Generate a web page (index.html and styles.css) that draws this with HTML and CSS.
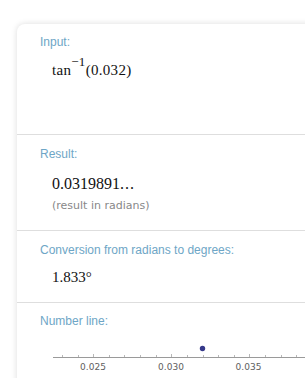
FILE: index.html
```html
<!DOCTYPE html>
<html>
  <head>
    <meta charset="utf-8">
    <title>arctan(0.032)</title>
    <link rel="stylesheet" href="styles.css">
  </head>
  <body>
    <div class="card">
      <section class="pod pod-input">
        <h2 class="label">Input:</h2>
        <div class="math">tan<sup class="sup">&minus;1</sup>(0.032)</div>
      </section>
      <section class="pod pod-result">
        <h2 class="label">Result:</h2>
        <div class="math">0.0319891<span class="dots">...</span></div>
        <div class="note">(result in radians)</div>
      </section>
      <section class="pod pod-degrees">
        <h2 class="label">Conversion from radians to degrees:</h2>
        <div class="math">1.833&deg;</div>
      </section>
      <section class="pod pod-line">
        <h2 class="label">Number line:</h2>
        <svg class="numberline" width="260" height="30" viewBox="0 0 260 30">
          <line x1="0" y1="13.5" x2="260" y2="13.5" stroke="#9a9a9a" stroke-width="1"/>
          <g stroke="#b8b8b8" stroke-width="1">
            <line x1="9.5" y1="11" x2="9.5" y2="13"/>
            <line x1="25.5" y1="11" x2="25.5" y2="13"/>
            <line x1="40.5" y1="10" x2="40.5" y2="13"/>
            <line x1="56.5" y1="11" x2="56.5" y2="13"/>
            <line x1="71.5" y1="11" x2="71.5" y2="13"/>
            <line x1="87.5" y1="11" x2="87.5" y2="13"/>
            <line x1="103.5" y1="11" x2="103.5" y2="13"/>
            <line x1="118.5" y1="10" x2="118.5" y2="13"/>
            <line x1="134.5" y1="11" x2="134.5" y2="13"/>
            <line x1="150.5" y1="11" x2="150.5" y2="13"/>
            <line x1="165.5" y1="11" x2="165.5" y2="13"/>
            <line x1="181.5" y1="11" x2="181.5" y2="13"/>
            <line x1="196.5" y1="10" x2="196.5" y2="13"/>
            <line x1="212.5" y1="11" x2="212.5" y2="13"/>
            <line x1="228.5" y1="11" x2="228.5" y2="13"/>
            <line x1="243.5" y1="11" x2="243.5" y2="13"/>
            <line x1="259.5" y1="11" x2="259.5" y2="13"/>
          </g>
          <circle cx="149.5" cy="4.5" r="2.7" fill="#36398a"/>
          <g class="ticklabel" fill="#5e5e5e">
            <text x="40" y="25.5" text-anchor="middle">0.025</text>
            <text x="118" y="25.5" text-anchor="middle">0.030</text>
            <text x="195.5" y="25.5" text-anchor="middle">0.035</text>
          </g>
        </svg>
      </section>
    </div>
  </body>
</html>
```

FILE: styles.css
```css
html,
body {
  overflow: hidden;
}

body {
  margin: 0;
  padding: 24px 0 0 17px;
  background-color: #fff;
  font-family: "Liberation Sans", Arial, sans-serif;
}

.card {
  width: 320px;
  border-radius: 8px 8px 0 0;
  box-shadow: 0 0 6px hsla(0, 0%, 0%, 0.14);
  background-color: #fff;
}

.pod {
  padding: 12px 0 0 23px;
  border-bottom: 1px solid #dedede;
}

.label {
  margin: 0;
  color: #6ea6c6;
  font-size: 12px;
  font-weight: normal;
  line-height: 14px;
}

.math {
  margin-left: 12px;
  color: #111;
  font-family: "Liberation Serif", "Times New Roman", serif;
  font-size: 15px;
  line-height: 18px;
}

.sup {
  font-size: 13px;
  vertical-align: 9px;
  line-height: 0;
}

.dots {
  letter-spacing: 1px;
}

.note {
  margin-left: 12px;
  color: #888;
  font-family: "DejaVu Sans", sans-serif;
  font-size: 11px;
  line-height: 13px;
}

.pod-input {
  height: 99px;
  padding-top: 11px;
}

.pod-input .math {
  margin-top: 12px;
  letter-spacing: 0.3px;
}

.pod-result {
  height: 83px;
}

.pod-result .math {
  margin-top: 14px;
  font-size: 16px;
}

.pod-result .note {
  margin-top: 6px;
}

.pod-degrees {
  height: 59px;
}

.pod-degrees .math {
  margin-top: 11px;
}

.pod-line {
  border-bottom: none;
  height: 80px;
  padding-top: 11px;
}

.numberline {
  display: block;
  margin: 16px 0 0 13px;
}

.ticklabel {
  font-family: "DejaVu Sans", sans-serif;
  font-size: 9px;
}
```
